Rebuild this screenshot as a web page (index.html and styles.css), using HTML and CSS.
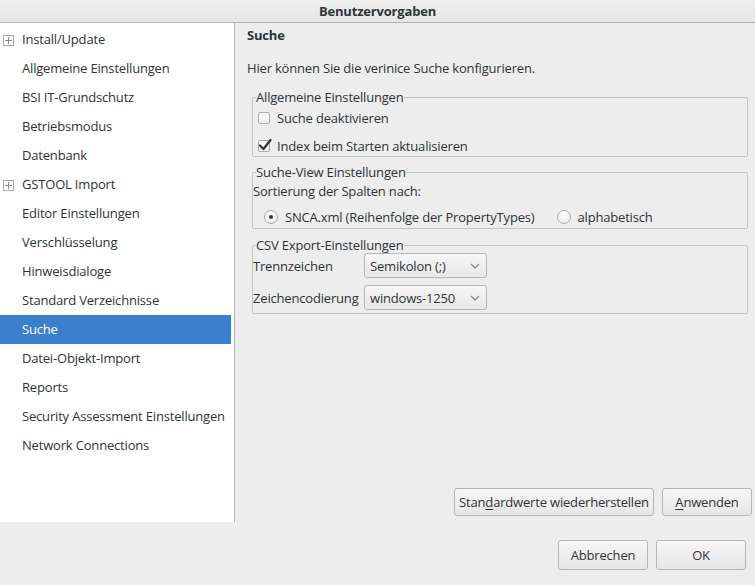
FILE: index.html
```html
<!DOCTYPE html>
<html lang="de">
<head>
<meta charset="utf-8">
<title>Benutzervorgaben</title>
<link rel="stylesheet" href="styles.css">
</head>
<body>
<div class="window">
  <div class="titlebar">Benutzervorgaben</div>
  <div class="main">
    <ul class="sidebar">
      <li class="item"><span class="expander"></span>Install/Update</li>
      <li class="item">Allgemeine Einstellungen</li>
      <li class="item">BSI IT-Grundschutz</li>
      <li class="item">Betriebsmodus</li>
      <li class="item">Datenbank</li>
      <li class="item"><span class="expander"></span>GSTOOL Import</li>
      <li class="item">Editor Einstellungen</li>
      <li class="item">Verschlüsselung</li>
      <li class="item">Hinweisdialoge</li>
      <li class="item">Standard Verzeichnisse</li>
      <li class="item selected">Suche</li>
      <li class="item">Datei-Objekt-Import</li>
      <li class="item">Reports</li>
      <li class="item">Security Assessment Einstellungen</li>
      <li class="item">Network Connections</li>
    </ul>
    <div class="content">
      <div class="page-title">Suche</div>
      <p class="description">Hier können Sie die verinice Suche konfigurieren.</p>

      <fieldset class="group group-general">
        <legend class="legend">Allgemeine Einstellungen</legend>
        <label class="check-row"><span class="checkbox"></span>Suche deaktivieren</label>
        <label class="check-row second"><span class="checkbox checked"><svg class="checkmark" viewBox="0 0 14 14" width="14" height="14"><path d="M2 7.5 L5.5 11 L12.5 2" fill="none" stroke="#2e3436" stroke-width="2.2" stroke-linecap="round" stroke-linejoin="round"/></svg></span>Index beim Starten aktualisieren</label>
      </fieldset>

      <fieldset class="group group-view">
        <legend class="legend">Suche-View Einstellungen</legend>
        <div class="plain-row">Sortierung der Spalten nach:</div>
        <div class="radio-row">
          <label class="radio-label"><span class="radio selected-radio"></span>SNCA.xml (Reihenfolge der PropertyTypes)</label>
          <label class="radio-label"><span class="radio"></span>alphabetisch</label>
        </div>
      </fieldset>

      <fieldset class="group group-csv">
        <legend class="legend">CSV Export-Einstellungen</legend>
        <div class="form-grid">
          <span class="form-label">Trennzeichen</span>
          <div class="combo"><span>Semikolon (;)</span><svg class="chevron" viewBox="0 0 10 6" width="10" height="6"><path d="M1 1 L5 5 L9 1" fill="none" stroke="#8b8e8f" stroke-width="1.4"/></svg></div>
          <span class="form-label">Zeichencodierung</span>
          <div class="combo"><span>windows-1250</span><svg class="chevron" viewBox="0 0 10 6" width="10" height="6"><path d="M1 1 L5 5 L9 1" fill="none" stroke="#8b8e8f" stroke-width="1.4"/></svg></div>
        </div>
      </fieldset>

      <div class="page-buttons">
        <button class="btn btn-defaults">Stan<u>d</u>ardwerte wiederherstellen</button>
        <button class="btn btn-apply"><u>A</u>nwenden</button>
      </div>
    </div>
  </div>
  <div class="dialog-buttons">
    <button class="btn btn-cancel">Abbrechen</button>
    <button class="btn btn-ok">OK</button>
  </div>
</div>
</body>
</html>
```
FILE: styles.css
```css
html, body {
  margin: 0;
  padding: 0;
  background: #ededed;
}

.window {
  width: 755px;
  height: 585px;
  display: flex;
  flex-direction: column;
  font-family: "Open Sans", "DejaVu Sans", sans-serif;
  font-size: 13px;
  letter-spacing: -0.18px;
  color: #2e3436;
  background: #ededed;
  overflow: hidden;
}

.titlebar {
  height: 22px;
  line-height: 22px;
  flex: none;
  text-align: center;
  font-weight: bold;
  background: linear-gradient(#efefef, #e6e6e6);
  border-bottom: 1px solid #b3b3b3;
}

.main {
  flex: none;
  height: 499px;
  display: flex;
}

.sidebar {
  list-style: none;
  margin: 0;
  padding: 2px 0 0 0;
  flex: none;
  width: 235px;
  box-sizing: border-box;
  background: #ffffff;
  border-right: 1px solid #b0b0ae;
}

.item {
  position: relative;
  height: 29px;
  line-height: 29px;
  padding-left: 22px;
  margin-right: 3px;
  white-space: nowrap;
}

.item.selected {
  background: #3b80cc;
  color: #ffffff;
}

.expander {
  position: absolute;
  left: 3px;
  top: 10px;
  width: 9px;
  height: 9px;
  border: 1px solid #a8a8a8;
  background:
    linear-gradient(#8a8a8a, #8a8a8a) center / 7px 1px no-repeat,
    linear-gradient(#8a8a8a, #8a8a8a) center / 1px 7px no-repeat;
}

.content {
  flex: 1;
  display: flex;
  flex-direction: column;
  padding: 4px 7px 0 12px;
  min-width: 0;
}

.page-title {
  font-weight: bold;
  line-height: 17px;
}

.description {
  margin: 16px 0 0 0;
  line-height: 17px;
}

.group {
  margin: 0 0 0 5px;
  padding: 0;
  border: 1px solid #c4c4c4;
  border-radius: 2px;
  min-width: 0;
}

.legend {
  padding: 0;
  margin-left: 3px;
  line-height: 17px;
}

.group-general {
  margin-top: 12px;
  padding-top: 2px;
}

.check-row {
  display: flex;
  align-items: center;
  height: 20px;
  line-height: 17px;
  padding-left: 5px;
}

.check-row.second {
  margin-top: 8px;
}

.checkbox {
  position: relative;
  width: 10px;
  height: 10px;
  margin-right: 7px;
  border: 1px solid #a9aaaa;
  border-radius: 2px;
  background: linear-gradient(#fcfcfc, #eeeeee);
  flex: none;
}

.checkmark {
  position: absolute;
  left: -1px;
  top: -3px;
}

.group-view {
  margin-top: 7px;
  padding-top: 2px;
}

.plain-row {
  line-height: 17px;
}

.radio-row {
  display: flex;
  align-items: center;
  height: 23px;
  margin-top: 5px;
  padding-left: 11px;
  gap: 22px;
}

.radio-label {
  display: flex;
  align-items: center;
}

.radio {
  width: 12px;
  height: 12px;
  border: 1px solid #a9aaaa;
  border-radius: 50%;
  background: linear-gradient(#fcfcfc, #eeeeee);
  margin-right: 7px;
  flex: none;
  position: relative;
}

.radio.selected-radio::after {
  content: "";
  position: absolute;
  left: 4px;
  top: 4px;
  width: 4px;
  height: 4px;
  border-radius: 50%;
  background: #2e3436;
}

.group-csv {
  margin-top: 8px;
  padding-bottom: 3px;
}

.form-grid {
  display: grid;
  grid-template-columns: 111px 123px;
  row-gap: 7px;
  align-items: center;
  margin-top: -1px;
}

.combo {
  height: 25px;
  box-sizing: border-box;
  border: 1px solid #b6b6b3;
  border-radius: 3px;
  background: linear-gradient(#f6f6f6, #e8e8e8);
  display: flex;
  align-items: center;
  justify-content: space-between;
  padding: 0 6px 0 5px;
}

.chevron {
  flex: none;
}

.page-buttons {
  margin-top: auto;
  margin-bottom: 6px;
  margin-right: -4px;
  display: flex;
  justify-content: flex-end;
  gap: 8px;
}

.btn {
  font-family: inherit;
  font-size: 13px;
  letter-spacing: inherit;
  color: #2e3436;
  border: 1px solid #b6b6b3;
  border-radius: 3px;
  background: linear-gradient(#f6f6f6, #e6e6e6);
  padding: 0;
  height: 28px;
  box-sizing: border-box;
}

.btn u {
  text-decoration-thickness: 1px;
  text-underline-offset: 2px;
}

.btn-defaults { width: 200px; }
.btn-apply { width: 90px; }

.dialog-buttons {
  flex: 1;
  display: flex;
  justify-content: flex-end;
  align-items: flex-start;
  gap: 8px;
  padding: 18px 9px 0 0;
}

.btn-cancel, .btn-ok {
  width: 90px;
  height: 30px;
}
```
